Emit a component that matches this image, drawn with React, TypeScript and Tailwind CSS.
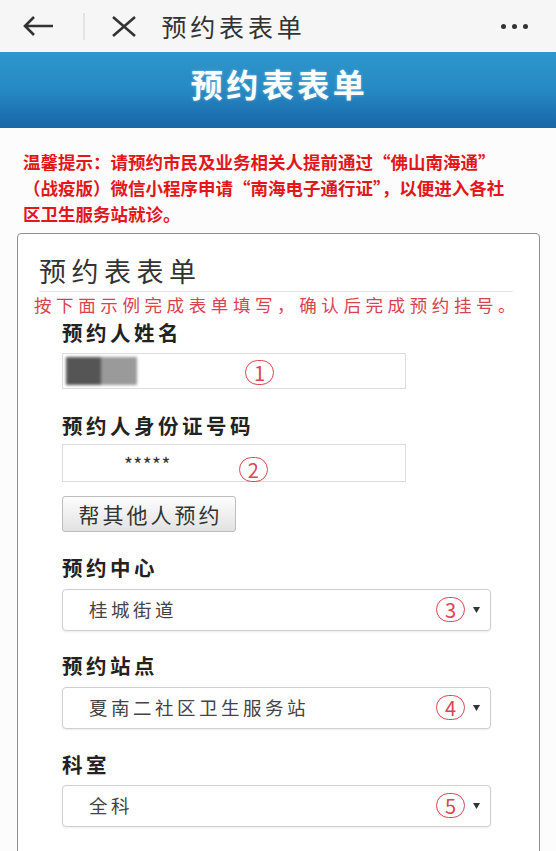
import React from "react";

const Circ = ({ n }: { n: string }) => (
  <span className="inline-flex h-[25px] w-[29px] items-center justify-center rounded-full border-[1.5px] border-[#d9464f] pt-[1px] text-[20px] leading-none text-[#d9464f]">
    {n}
  </span>
);

const Label = ({ children, mt }: { children: React.ReactNode; mt: string }) => (
  <div className={`${mt} text-[20.5px] font-bold leading-[26px] tracking-[3.5px] text-[#222]`}>{children}</div>
);

const Select = ({ text, n, mt }: { text: string; n: string; mt: string }) => (
  <div className={`${mt} flex h-[42px] w-[429px] items-center rounded-[4px] border border-[#cfcfcf] bg-white pl-[26px] pr-[10px] shadow-[0_1px_2px_rgba(0,0,0,0.08)]`}>
    <span className="text-[18.5px] tracking-[3.5px] text-[#444]">{text}</span>
    <span className="ml-auto">
      <Circ n={n} />
    </span>
    <svg className="ml-[8px]" width="7" height="6" viewBox="0 0 7 6">
      <path d="M0 0H7L3.5 6Z" fill="#333" />
    </svg>
  </div>
);

export default function App() {
  return (
    <div
      className="min-h-screen w-[556px] overflow-hidden bg-[#fcfcfc]"
      style={{ fontFamily: '"Noto Sans CJK SC", "Noto Sans", sans-serif' }}
    >
      {/* top nav */}
      <div className="flex h-[52px] items-center bg-[#f6f6f6]">
        <svg className="ml-[22px]" width="32" height="22" viewBox="0 0 32 22" fill="none">
          <path d="M31 11H3M12 2L3 11L12 20" stroke="#333" strokeWidth="2.6" />
        </svg>
        <div className="ml-[29px] h-[27px] w-[1.5px] bg-[#e2e2e2]" />
        <svg className="ml-[26px]" width="26" height="23" viewBox="0 0 26 23" fill="none">
          <path d="M2 2L24 21M24 2L2 21" stroke="#333" strokeWidth="2.6" />
        </svg>
        <div className="ml-[25px] text-[25px] leading-none tracking-[3.8px] text-[#333]">预约表表单</div>
        <div className="ml-auto mr-[28px] flex gap-[6px]">
          <span className="h-[5px] w-[5px] rounded-full bg-[#333]" />
          <span className="h-[5px] w-[5px] rounded-full bg-[#333]" />
          <span className="h-[5px] w-[5px] rounded-full bg-[#333]" />
        </div>
      </div>

      {/* blue header */}
      <div className="flex h-[76px] items-center justify-center bg-gradient-to-b from-[#2e96cc] via-[#2689c3] to-[#1866a6] pb-[14px]">
        <div className="pl-[3px] text-[32px] font-bold leading-none tracking-[3.5px] text-white [text-shadow:0_0_3px_rgba(255,255,255,0.35)]">
          预约表表单
        </div>
      </div>

      {/* warning */}
      <div className="whitespace-nowrap px-[23px] pt-[21px] text-[17.5px] font-bold leading-[26px] text-[#e3161c]">
        温馨提示：请预约市民及业务相关人提前通过“佛山南海通”
        <br />
        （战疫版）微信小程序申请“南海电子通行证”，以便进入各社
        <br />
        区卫生服务站就诊。
      </div>

      {/* card */}
      <div className="ml-[17px] mr-[16px] mt-[6px] rounded-[4px] border-[1.5px] border-[#8f8f8f] bg-white pb-[40px]">
        <div className="ml-[21px] pt-[19px] text-[27px] leading-[36px] tracking-[5.5px] text-[#333]">预约表表单</div>
        <div className="ml-[21px] mr-[26px] mt-[2px] h-px bg-[#e4e4e4]" />
        <div className="ml-[16px] mt-[2px] whitespace-nowrap text-[17.5px] leading-[22px] tracking-[4.6px] text-[#d8434f]">
          按下面示例完成表单填写，确认后完成预约挂号。
        </div>

        <div className="pl-[44px]">
          <Label mt="mt-[3px]">预约人姓名</Label>
          <div className="mt-[8px] flex h-[36px] w-[344px] items-center border border-[#dcdcdc] bg-white">
            <div className="ml-[3px] flex h-[28px] blur-[1.5px]">
              <div className="w-[35px] bg-[#555]" />
              <div className="w-[36px] bg-[#9a9a9a]" />
            </div>
            <span className="ml-[108px] mt-[4px]">
              <Circ n="1" />
            </span>
          </div>

          <Label mt="mt-[23px]">预约人身份证号码</Label>
          <div className="mt-[6px] flex h-[38px] w-[344px] items-start border border-[#dcdcdc] bg-white">
            <span className="ml-[61px] mt-[9px] text-[19px] leading-none tracking-[0.5px] text-[#333]">*****</span>
            <span className="ml-[68px] mt-[12px]">
              <Circ n="2" />
            </span>
          </div>

          <div className="mt-[14px] flex h-[36px] w-[174px] items-center justify-center rounded-[3px] border border-[#bdbdbd] bg-gradient-to-b from-[#fdfdfd] to-[#e2e2e2] pl-[3px] text-[21px] leading-none tracking-[3px] text-[#333]">
            帮其他人预约
          </div>

          <Label mt="mt-[22px]">预约中心</Label>
          <Select mt="mt-[9px]" text="桂城街道" n="3" />

          <Label mt="mt-[21px]">预约站点</Label>
          <Select mt="mt-[9px]" text="夏南二社区卫生服务站" n="4" />

          <Label mt="mt-[22px]">科室</Label>
          <Select mt="mt-[8px]" text="全科" n="5" />
        </div>
      </div>
    </div>
  );
}
